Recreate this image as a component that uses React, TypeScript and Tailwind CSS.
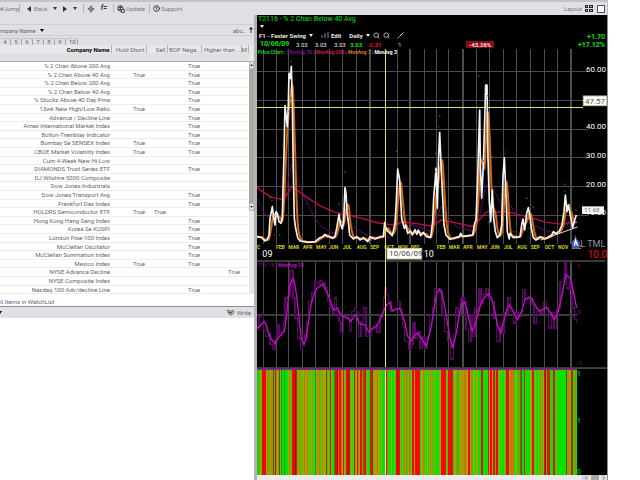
import { ChevronDown, HelpCircle, Paintbrush, Search, Zap } from "lucide-react";

type Point = [number, number];

// name, then which of the four condition columns are true
const rows: [string, string][] = [
  ["% 2 Chan Above 200 Avg", "0010"],
  ["% 2 Chan Above 40 Avg", "1010"],
  ["% 2 Chan Below 200 Avg", "0010"],
  ["% 2 Chan Below 40 Avg", "0010"],
  ["% Stocks Above 40 Day Pma", "0010"],
  ["13wk New High/Low Ratio", "1010"],
  ["Advance / Decline Line", "0010"],
  ["Amex International Market Index", "0010"],
  ["Bolton-Tremblay Indicator", "0010"],
  ["Bombay Se SENSEX Index", "1010"],
  ["CBOE Market Volatility Index", "1010"],
  ["Cum 4-Week New Hi-Low", "0000"],
  ["DIAMONDS Trust Series ETF", "0010"],
  ["DJ Wilshire 5000 Composite", "0000"],
  ["Dow Jones Industrials", "0000"],
  ["Dow Jones Transport Avg", "0010"],
  ["Frankfurt Dax Index", "0010"],
  ["HOLDRS Semiconductor ETF", "1100"],
  ["Hong Kong Hang Seng Index", "0010"],
  ["Korea Se KOSPI", "0010"],
  ["London Ftse-100 Index", "0010"],
  ["McClellan Oscillator", "0010"],
  ["McClellan Summation Index", "0010"],
  ["Mexico Index", "1010"],
  ["NYSE Advance Decline", "0001"],
  ["NYSE Composite Index", "0000"],
  ["Nasdaq 100 Adv/decline Line", "0010"],
];

const gridX = [
  26, 64, 100, 142, 182, 222, 262, 305, 345, 390, 427, 464, 508, 543, 580, 624, 664, 704, 745, 784, 826, 868, 908, 948,
];
const thickX = [64, 345, 464, 624, 948];

const months: [string, number][] = [
  ["C", 6], ["FEB", 63], ["MAR", 100], ["APR", 143], ["MAY", 183], ["JUN", 221], ["JUL", 263], ["AUG", 305],
  ["SEP", 345], ["OCT", 388], ["NOV", 428], ["DEC", 467], ["FEB", 545], ["MAR", 581], ["APR", 624], ["MAY", 666],
  ["JUN", 705], ["JUL", 746], ["AUG", 786], ["SEP", 827], ["OCT", 869], ["NOV", 909], ["DEC", 950],
];

const parse = (s: string): Point[] => s.split(" ").map((p) => p.split(",").map(Number) as Point);

const price = parse(
  "6,545 20,548 30,558 37,553 42,540 45,490 52,455 56,488 60,510 63,470 67,475 72,500 78,505 82,490 84,400 87,300 90,152 93,180 97,215 100,150 102,55 106,70 109,34 112,150 115,350 118,490 122,520 128,548 135,558 160,562 180,560 195,548 202,546 210,538 216,544 225,546 232,550 240,544 246,515 252,478 256,505 262,522 266,500 270,398 273,415 276,470 280,500 284,540 295,552 305,545 315,555 325,548 338,560 345,545 360,552 375,545 385,545 389,502 393,520 400,530 412,542 420,505 424,440 428,342 434,375 440,490 448,520 452,510 458,535 466,528 472,540 480,524 486,538 490,525 497,542 505,532 515,545 527,548 533,500 536,430 541,370 543,340 547,460 551,300 554,232 558,325 563,430 567,510 573,540 585,553 600,548 613,545 617,535 622,545 640,542 653,540 659,505 663,495 668,370 674,165 676,330 680,430 685,330 689,200 692,90 696,90 699,310 703,440 707,500 712,405 716,490 721,530 727,548 735,540 740,510 744,365 748,308 753,420 757,530 763,552 765,535 775,548 795,545 800,510 804,492 809,525 815,475 820,458 825,485 829,520 835,548 843,555 855,545 870,552 890,540 895,530 905,536 913,528 921,510 927,470 931,420 936,470 940,450 945,475 953,518 959,495 964,480",
);
const avg50 = parse(
  "6,430 20,460 40,490 55,490 80,480 95,400 110,328 125,365 150,430 180,490 200,515 230,533 245,535 255,520 275,505 300,520 340,543 380,548 410,545 430,510 450,500 480,512 530,530 545,490 558,455 575,480 605,515 655,530 675,480 690,400 700,385 710,395 725,420 740,455 757,440 795,490 865,525 905,535 935,510 964,490",
);
const avg200 = parse(
  "6,397 30,415 50,427 80,433 95,420 110,395 130,408 160,430 200,455 240,472 280,480 320,490 370,504 410,509 430,505 440,500 480,505 530,513 545,505 558,495 585,500 655,515 685,480 700,468 720,472 745,470 775,475 825,487 875,502 925,508 950,500 965,502",
);
const tsv = parse(
  "6,215 12,175 20,172 26,215 32,235 40,225 45,260 52,275 60,245 66,200 72,232 80,220 85,190 90,120 98,115 105,38 110,38 114,120 120,180 128,240 136,275 142,230 150,240 156,190 160,130 170,105 180,70 188,80 195,68 203,75 210,90 218,130 225,150 232,165 238,120 245,160 252,190 258,222 266,175 272,180 283,220 290,160 298,150 305,160 310,235 318,190 326,150 333,235 340,235 348,215 358,200 366,222 375,175 385,120 388,90 393,110 400,130 408,160 418,155 428,130 435,155 442,205 448,250 460,275 468,260 474,195 480,240 488,220 495,270 503,235 510,270 518,235 524,170 532,150 538,92 555,95 561,170 568,220 577,250 587,303 595,230 601,150 609,170 618,120 627,130 633,215 641,250 648,170 653,235 660,150 667,160 672,92 678,135 685,110 693,92 700,120 710,130 717,180 725,250 735,205 742,225 747,165 759,120 767,160 775,195 783,165 790,175 802,95 810,125 825,120 831,140 837,195 845,160 853,165 865,130 875,150 881,210 890,165 897,210 905,150 915,70 925,60 930,15 935,90 945,70 951,150 959,185 964,195",
);
const tsvAvg = parse(
  "6,210 15,205 27,190 32,195 40,225 50,245 60,257 70,238 78,232 88,220 95,170 103,90 110,68 115,62 120,80 127,130 133,190 139,240 147,260 153,240 160,200 166,150 175,115 185,92 203,78 212,95 220,112 228,135 237,157 247,150 255,165 262,175 275,177 287,190 295,178 303,170 312,197 328,200 342,223 350,212 365,205 377,180 388,155 395,140 405,135 412,158 425,153 435,152 442,172 450,195 458,235 468,250 478,232 488,225 495,235 505,250 513,265 520,240 528,210 535,165 545,105 553,95 560,105 567,135 575,180 583,230 593,270 602,235 612,175 620,138 628,133 635,150 643,190 652,220 662,195 672,155 683,125 700,107 710,122 720,160 728,205 737,225 745,195 755,155 763,140 775,160 787,185 800,160 810,125 822,117 833,125 845,150 855,160 873,148 887,165 898,185 908,165 917,130 925,90 933,50 945,60 955,100 965,150",
);

const ticks: [number, number, boolean][] = [
  [100, 2, true], [108, 20, true], [103, 168, false], [84, 275, true], [85, 240, true], [46, 428, true], [51, 436, true],
  [58, 540, false], [74, 540, true], [252, 448, true], [270, 351, true], [389, 482, true], [425, 289, true],
  [428, 316, false], [541, 350, true], [542, 295, true], [551, 215, false], [554, 182, true], [671, 64, true],
  [685, 318, false], [699, 122, false], [711, 306, true], [746, 285, true], [747, 297, true], [700, 502, false],
  [816, 430, true], [834, 456, true], [820, 520, false], [929, 388, true], [929, 409, false], [946, 446, true],
  [963, 466, true], [110, 130, true], [288, 538, false], [585, 540, true], [776, 530, true],
];

// one letter per day
const ribbon =
  "gogygrrrryoogyogrgroygryGggGgggyoygrrrdrgyoygyyoyyoygyygygGyoyogyoyyyrgygryggGrrdorroyrygrrdrgygyrgyroyrroGrrgyggrrrgyyyoyygygggrrogggyggygrdrrygygoyogyogyrryrrrrrgyyogygygyoygygygggyyrrrrrygrrrrrgyygoogyyoyooyyrryogyygyygggrrgggggryrryrrgrrgygyggygrrryoooogyygogGrggrgggggyyrrgyggygoygyrdgrrrgggrrgygggggggggrgoygrrggog";
const ribbonFill: Record<string, string> = {
  r: "#fa0505",
  d: "#b40505",
  g: "#05e305",
  G: "#0a9f10",
  y: "#a0a805",
  o: "#c47808",
};

const line = (pts: Point[]) => pts.map((p) => p.join(",")).join(" ");

const steps = (pts: Point[]) => pts.map(([x, y], i) => (i === 0 ? `M${x} ${y}` : `H${x}V${y}`)).join("");

// trailing average over the last n samples of an evenly resampled series
function trailing(pts: Point[], n: number): Point[] {
  const even: Point[] = [];
  let k = 0;
  for (let x = pts[0][0]; x <= pts[pts.length - 1][0]; x += 2) {
    while (k < pts.length - 2 && pts[k + 1][0] < x) k++;
    const [x0, y0] = pts[k];
    const [x1, y1] = pts[k + 1];
    even.push([x, y0 + ((y1 - y0) * (x - x0)) / (x1 - x0)]);
  }
  return even.map(([x], i) => {
    const part = even.slice(Math.max(0, i - n + 1), i + 1);
    return [x, Math.round(part.reduce((s, p) => s + p[1], 0) / part.length)];
  });
}

function Caret({ className = "" }: { className?: string }) {
  return (
    <svg viewBox="0 0 8 6" className={`h-[3px] w-[4px] shrink-0 ${className}`}>
      <path d="M0 0h8L4 6z" fill="currentColor" />
    </svg>
  );
}

function Divider() {
  return <span className="h-[9px] w-px shrink-0 bg-[#b4b3ba]" />;
}

function Toolbar() {
  return (
    <header className="mr-8 flex h-[15px] items-center border-t-2 border-r border-[#c4c3ca] bg-[#e0dfe4] text-[#77767d]">
      <div className="flex w-[20px] shrink-0 items-center justify-between">
        <button className="flex items-center">
          <Paintbrush size={4} color="#333" />
          Jump
        </button>
        <Divider />
      </div>
      <div className="flex w-[64px] shrink-0 items-center justify-between pl-[7px]">
        <button className="flex items-center gap-[3px]">
          <svg viewBox="0 0 8 12" className="h-[6px] w-[4px]">
            <path d="M8 0v12L0 6z" fill="#333" />
          </svg>
          Back
        </button>
        <button aria-label="Back history"><Caret className="text-[#333]" /></button>
        <button aria-label="Forward">
          <svg viewBox="0 0 8 12" className="h-[6px] w-[4px]">
            <path d="M0 0v12l8-6z" fill="#333" />
          </svg>
        </button>
        <button aria-label="Forward history"><Caret className="text-[#333]" /></button>
        <Divider />
      </div>
      <div className="flex w-[30px] shrink-0 items-center justify-between pl-[3px]">
        <button aria-label="Scan"><Zap size={8} color="#444" fill="#999" /></button>
        <button className="text-[7px] font-bold text-[#333] italic" aria-label="Formula">f=</button>
        <Divider />
      </div>
      <div className="flex w-[36px] shrink-0 items-center justify-between pl-[3px]">
        <button className="flex items-center gap-px">
          <svg viewBox="0 0 24 24" className="h-[8px] w-[8px]" fill="none" stroke="#444" strokeWidth="3">
            <circle cx="10" cy="10" r="8" />
            <path d="M4 7h12M3 13h10M10 2v14" />
            <path d="M13 13h9v9h-9z" fill="#ddd" />
          </svg>
          Update
        </button>
        <Divider />
      </div>
      <button className="ml-[3px] flex items-center gap-px">
        <HelpCircle size={7} color="#333" strokeWidth={3} />
        Support
      </button>
      <button className="ml-auto flex items-center gap-[3px]">
        Layout
        <svg viewBox="0 0 8 7" className="h-[7px] w-[8px]" shapeRendering="crispEdges">
          <path d="M0 0h3v3H0zM4 0h4v3H4zM0 4h3v3H0zM4 4h4v3H4z" fill="#222" />
          <path d="M1 1h1v1H1zM5 1h2v1H5zM1 5h1v1H1zM5 5h2v1H5z" fill="#bbb" />
        </svg>
      </button>
      <button aria-label="Maximize" className="mr-[2px] ml-[4px] h-[8px] w-[8px] border border-[#555] bg-white" />
    </header>
  );
}

function ScrollButton({ up = false }: { up?: boolean }) {
  return (
    <button
      aria-label={up ? "Scroll up" : "Scroll down"}
      className="flex h-[8px] items-center justify-center border border-[#b5b4bb] bg-[#e4e3e8] text-[#333]"
    >
      <svg viewBox="0 0 6 4" className="h-[2px] w-[3px]">
        <path d={up ? "M0 4h6L3 0z" : "M0 0h6L3 4z"} fill="currentColor" />
      </svg>
    </button>
  );
}

function WatchList() {
  return (
    <section className="flex w-[257px] shrink-0 flex-col border-r-3 border-[#b3b2b8] bg-white text-[#66656b]">
      <div className="h-[10px] border-b border-[#cfced4] bg-[#e0dfe4]" />
      <div className="flex h-[11px] items-center justify-between border-b border-[#cfced4] bg-[#e0dfe4] pr-[1px]">
        <button className="flex items-center gap-[4px]">
          mpany Name <Caret className="text-black" />
        </button>
        <span className="flex items-center gap-[3px]">
          abc..
          <svg viewBox="0 0 5 8" className="h-[6px] w-[4px]">
            <path d="M2 8V3H0l2.500-3L5 3H3v5z" fill="#000" />
          </svg>
        </span>
      </div>
      <div className="flex h-[9px] items-end bg-[#e0dfe4]">
        {["4", "5", "6", "7", "8", "9", "10"].map((n) => (
          <button
            key={n}
            className="h-[7px] min-w-[11px] rounded-tr-[3px] border-t border-r border-[#a3a2a8] border-t-[#c4c3ca] px-[1px] leading-[6px] last:pl-[3px]"
          >
            {n}
          </button>
        ))}
      </div>
      <div className="flex">
        <table className="w-full table-fixed border-collapse text-right leading-[7px]">
          <colgroup>
            <col className="w-[111px]" />
            <col className="w-[35px]" />
            <col className="w-[21px]" />
            <col className="w-[34px]" />
            <col className="w-[40px]" />
            <col />
          </colgroup>
          <thead className="bg-[#e0dfe4]">
            <tr className="h-[8px] whitespace-nowrap *:border-r *:border-[#b4b3ba] *:bg-[#e9e8ec] *:p-0 *:pr-px *:font-normal">
              <th><span className="font-bold text-black">Company Name</span></th>
              <th>Hold Short</th>
              <th>Sell</th>
              <th>BOP Nega..</th>
              <th>Higher than ..</th>
              <th>M</th>
            </tr>
            <tr className="h-[8px] border-b border-[#a9a8af]">
              <td colSpan={6} />
            </tr>
          </thead>
          <tbody>
            {rows.map(([name, flags]) => (
              <tr
                key={name}
                className="h-[9px] border-b border-[#efeee6] whitespace-nowrap *:p-0 *:pr-px nth-[5n+2]:h-[8px] nth-[5n+4]:h-[8px]"
              >
                <td>{name}</td>
                {flags.split("").map((f, i) => (
                  <td key={i}>{f === "1" ? "True" : ""}</td>
                ))}
                <td />
              </tr>
            ))}
          </tbody>
        </table>
        <div className="flex w-[5px] shrink-0 flex-col bg-[#e9e8e6] pt-[16px]">
          <ScrollButton up />
          <div className="h-[134px] bg-[#aaa89a]" />
          <ScrollButton />
        </div>
      </div>
      <div className="flex h-[13px] items-end border-b border-[#8f8e95] pb-px">
        <p><span className="text-[#2a7ad8]">6</span> Items in WatchList</p>
      </div>
      <div className="flex h-[11px] items-center justify-between bg-[#e0dfe4] pr-[3px]">
        <button aria-label="Notes menu"><Caret className="-ml-[2px] text-black" /></button>
        <button className="flex items-center gap-[2px]">
          <svg viewBox="0 0 24 20" className="h-[7px] w-[8px]" fill="none" stroke="#222" strokeWidth="2">
            <path d="M2 3l9 4 6-4 5 6-9 9-9-6z" />
            <path d="M5 10h10M9 14l9-7" />
          </svg>
          Write
        </button>
      </div>
    </section>
  );
}

function ChartHeader() {
  return (
    <div className="h-[34px] pl-px font-bold whitespace-nowrap text-[#e8e8e8]">
      <h1 className="h-[8px] text-[7px] leading-[8px] font-normal text-[#0ee00e]">T2116 - % 2 Chan Below 40 Avg</h1>
      <button aria-label="Symbol menu" className="flex h-[7px] items-center pl-[2px]"><Caret /></button>
      <div className="flex h-[10px] items-center gap-[8px] pl-px">
        <button className="flex items-center gap-[3px]">F1 - Faster Swing <Caret /></button>
        <button className="flex items-center gap-[2px]">
          <svg viewBox="0 0 8 6" className="h-[6px] w-[8px]" shapeRendering="crispEdges">
            <path d="M0 3h2v3H0zM3 1h2v5H3zM6 0h2v6H6z" fill="#444" />
          </svg>
          Edit
        </button>
        <div className="flex items-center gap-[3px]">
          <button className="flex items-center gap-[3px]">Daily <Caret /></button>
          <button aria-label="Zoom in"><Search size={7} strokeWidth={3} color="#bbb" /></button>
          <button aria-label="Zoom out"><Search size={7} strokeWidth={3} color="#bbb" /></button>
          <button aria-label="Draw" className="ml-[4px]">
            <svg viewBox="0 0 14 14" className="h-[7px] w-[7px]" fill="none">
              <path d="M5 9L13 1" stroke="#ddd" strokeWidth="2" />
              <path d="M1 13l4-4" stroke="#c8b060" strokeWidth="2" />
            </svg>
          </button>
        </div>
      </div>
      <div className="flex h-[9px] items-center pl-[2px]">
        <span className="w-[36px] text-[7px] text-[#0ee00e]">10/06/09</span>
        <span className="w-[19px] font-normal">3.03</span>
        <span className="w-[19px] font-normal">3.03</span>
        <span className="w-[16px] font-normal">3.03</span>
        <span className="w-[17px] text-[#0ee00e]">3.03</span>
        <span className="w-[31px] text-[#f01010]">-2.31</span>
        <span className="w-[68px] font-normal text-[#e8e020]">1</span>
        <span className="bg-[#8c0d12] px-[3px] leading-[7px]">-43.26%</span>
        <span className="mr-[2px] ml-auto flex flex-col self-end text-right text-[7px] leading-[8px] text-[#0ee00e]">
          <span>+1.70</span>
          <span>+17.12%</span>
        </span>
      </div>
    </div>
  );
}

function VerticalGrid({ top, bottom }: { top: number; bottom: number }) {
  return (
    <g stroke="#4c4c4c" shapeRendering="crispEdges">
      {gridX.map((x) => (
        <line key={x} x1={x} x2={x} y1={top} y2={bottom} strokeWidth={thickX.includes(x) ? 5 : 3} />
      ))}
    </g>
  );
}

// All three charts share the same x axis, three units to the pixel.
function PriceChart() {
  return (
    <svg viewBox="6 -18 1050 633" className="block w-full">
      <VerticalGrid top={-18} bottom={566} />
      <g stroke="#4c4c4c" strokeWidth="3" shapeRendering="crispEdges">
        {[50, 136, 222, 308, 394, 480].map((y) => (
          <line key={y} x1="6" x2="1000" y1={y} y2={y} />
        ))}
      </g>
      <text x="8" y="-4" fontSize="15" fontWeight="bold" className="whitespace-pre">
        <tspan fill="#0ed00e">Price Chart : </tspan>
        <tspan fill="#700f90">MovAvg 50 </tspan>
        <tspan fill="#ddd">: </tspan>
        <tspan fill="#d0106a">MovAvg 200 </tspan>
        <tspan fill="#ddd">: </tspan>
        <tspan fill="#e07010">MovAvg 7 </tspan>
        <tspan fill="#fff">: MovAvg 3</tspan>
      </text>
      <g fill="none">
        <polyline points={line(avg50)} stroke="#560a68" strokeWidth="3" />
        <polyline points={line(avg200)} stroke="#b80b58" strokeWidth="4" />
        <polyline points={line(trailing(price, 7))} stroke="#d9660a" strokeWidth="6" />
        <polyline points={line(price)} stroke="#f4f4f4" strokeWidth="5" strokeLinejoin="round" />
        <path d="M858 555L967 516" stroke="#ddd" strokeWidth="3" />
      </g>
      {ticks.map(([x, y, up]) => (
        <rect key={`${x}-${y}`} x={x - 2} y={y - 2} width="4" height="4" fill={up ? "#0b960b" : "#b01010"} />
      ))}
      <g fontSize="15" fontWeight="bold" fill="#d2d20a">
        {months.map(([m, x], i) => (
          <text key={i} x={x} y="583">{m}</text>
        ))}
      </g>
      <g fontSize="27" fill="#fff">
        <text x="22" y="606">09</text>
        <text x="506" y="606">10</text>
      </g>
      <g fontSize="24" fill="#fff" textAnchor="end">
        {["60.00", "50.00", "40.00", "30.00", "20.00", "10.00"].map((label, i) => (
          <text key={label} x="1053" y={51 + i * 86}>{label}</text>
        ))}
      </g>
      <g stroke="#e0e06c" strokeWidth="3" shapeRendering="crispEdges">
        <line x1="6" x2="984" y1="157" y2="157" />
        <line x1="391" x2="391" y1="-18" y2="615" />
      </g>
      <rect x="985" y="123" width="70" height="29" fill="#fff" stroke="#c8c890" strokeWidth="3" />
      <text x="990" y="147" fontSize="24" fill="#555">47.57</text>
      <rect x="981" y="454" width="66" height="23" fill="#f4f4f4" />
      <text x="988" y="472" fontSize="18" fill="#666">11.63</text>
      <rect x="396" y="580" width="104" height="32" fill="#fff" stroke="#c8c890" strokeWidth="3" />
      <text x="402" y="604" fontSize="24" fill="#444">10/06/09</text>
      <path d="M961 538l4 14 9 10v14l-7 5h-10l-7-7v-12l8-10z" fill="#4457c8" />
      <path d="M961 548l-5 24h4l2-9 4 9h4z" fill="#fff" />
      <text x="976" y="575" fontSize="27" fill="#999">L TML</text>
      <text x="998" y="608" fontSize="30" fill="#e80c0c">10.0</text>
    </svg>
  );
}

function TsvChart() {
  return (
    <svg viewBox="6 6 1050 324" className="block w-full">
      <VerticalGrid top={12} bottom={327} />
      <g stroke="#3a3a3a" shapeRendering="crispEdges">
        <line x1="6" x2="1050" y1="9" y2="9" strokeWidth="5" />
        <line x1="6" x2="965" y1="171" y2="171" strokeWidth="5" />
        <line x1="6" x2="1056" y1="328" y2="328" strokeWidth="3" />
      </g>
      <path d={steps(tsv)} fill="none" stroke="#5c0663" strokeWidth="4" shapeRendering="crispEdges" />
      <polyline points={line(tsvAvg)} fill="none" stroke="#c40cc8" strokeWidth="4" />
      <line x1="391" x2="391" y1="6" y2="327" stroke="#e8e870" strokeWidth="3" shapeRendering="crispEdges" />
      <g fontSize="15" fontWeight="bold">
        <text x="8" y="26" fill="#5c0663">TSV 18 :</text>
        <text x="70" y="26" fill="#c40cc8">MovAvg 18</text>
      </g>
      <g fontSize="21" fill="#7a0b84">
        <text x="966" y="33">1</text>
        <text x="966" y="170">0</text>
        <text x="964" y="324">-1</text>
      </g>
    </svg>
  );
}

function RibbonChart() {
  return (
    <svg viewBox="6 9 1050 321" className="block w-full">
      <g shapeRendering="crispEdges">
        {ribbon.split("").slice(0, 320).map((c, i) => (
          <rect key={i} x={6 + i * 3} y="15" width="3" height="315" fill={ribbonFill[c]} />
        ))}
        <rect x="6" y="9" width="1050" height="3" fill="#444" />
        <rect x="6" y="12" width="960" height="3" fill="#a010a8" />
        <rect x="390" y="15" width="3" height="315" fill="#e8f8c0" />
      </g>
      <g fontSize="21" fill="#0ee00e">
        <text x="966" y="33">1</text>
        <text x="966" y="173">1</text>
        <text x="966" y="326">0</text>
      </g>
    </svg>
  );
}

export default function App() {
  return (
    <div className="flex min-h-screen flex-col bg-white font-['Roboto','Liberation_Sans',sans-serif] text-[6px] leading-[7px]">
      <Toolbar />
      <main className="mr-8 flex grow">
        <WatchList />
        <section className="flex min-w-0 grow flex-col border-r border-[#8f8e95] bg-black">
          <ChartHeader />
          <PriceChart />
          <TsvChart />
          <RibbonChart />
          <div className="flex h-[5px] justify-end gap-[2px] bg-[#ececec] pr-px text-[#555]">
            <button aria-label="Scroll left" className="flex h-[5px] w-[7px] items-center justify-center bg-[#d5d4da]">
              <ChevronDown size={4} strokeWidth={4} className="rotate-90" />
            </button>
            <span className="h-[5px] w-[8px] bg-[#aaa89a]" />
            <button aria-label="Scroll right" className="flex h-[5px] w-[5px] items-center justify-center bg-[#d5d4da]">
              <ChevronDown size={4} strokeWidth={4} className="-rotate-90" />
            </button>
          </div>
        </section>
      </main>
    </div>
  );
}
